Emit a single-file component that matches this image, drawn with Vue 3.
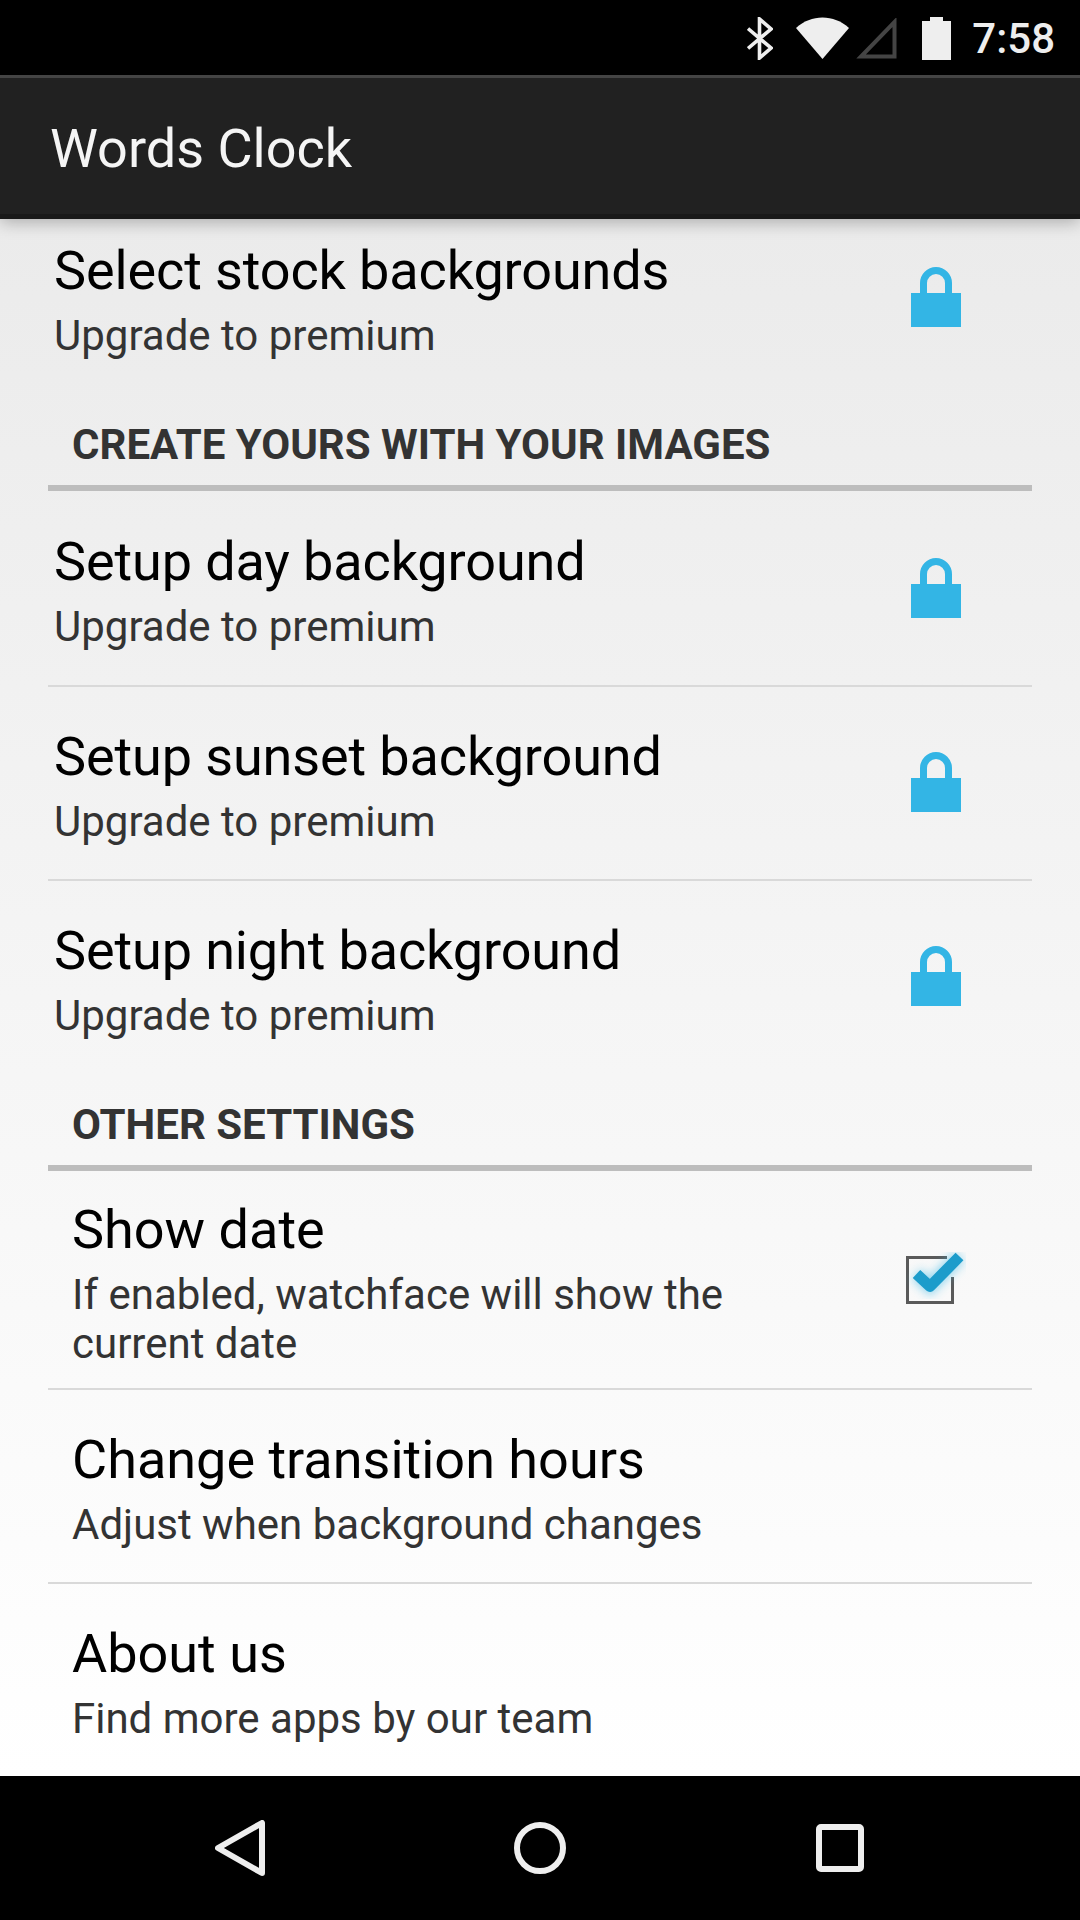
<script setup>
const lockedTop = [
  { title: 'Setup day background', sub: 'Upgrade to premium', cls: 'row-tall' },
  { title: 'Setup sunset background', sub: 'Upgrade to premium', cls: '' },
  { title: 'Setup night background', sub: 'Upgrade to premium', cls: 'row-plain row-night' },
]
</script>

<template>
  <div class="screen">
    <header class="status">
      <svg class="ic-bt" viewBox="0 0 26 43" width="26" height="43">
        <path d="M1 11.500 L24 31 L12.500 41 V2 L24 12 L1 31.500" fill="none" stroke="#eee" stroke-width="3.6" />
      </svg>
      <svg class="ic-wifi" viewBox="0 0 53 42" width="53" height="42">
        <path d="M0 11 C15 -3 38 -3 53 11 L26.500 42 Z" fill="#eee" />
      </svg>
      <svg class="ic-signal" viewBox="0 0 41 41" width="41" height="41">
        <path d="M38.500 4 V38.500 H5 Z" fill="none" stroke="#444" stroke-width="4" />
      </svg>
      <svg class="ic-battery" viewBox="0 0 29 43" width="29" height="43">
        <path d="M8 0 H21 V4 H29 V43 H0 V4 H8 Z" fill="#eee" />
      </svg>
      <span class="time">7:58</span>
    </header>

    <div class="appbar">
      <span class="appbar-title">Words Clock</span>
    </div>

    <main class="content">
      <div class="row row-locked row-first row-plain">
        <div class="text">
          <div class="title">Select stock backgrounds</div>
          <div class="sub">Upgrade to premium</div>
        </div>
        <svg class="lock" viewBox="0 0 50 60" width="50" height="60">
          <path d="M12.500 28 V16 A12.500 12.500 0 0 1 37.500 16 V28" fill="none" stroke="#33b5e5" stroke-width="7" />
          <rect x="0" y="26" width="50" height="34" fill="#33b5e5" />
        </svg>
      </div>

      <div class="section">CREATE YOURS WITH YOUR IMAGES</div>

      <div v-for="item in lockedTop" :key="item.title" class="row row-locked" :class="item.cls">
        <div class="text">
          <div class="title">{{ item.title }}</div>
          <div class="sub">{{ item.sub }}</div>
        </div>
        <svg class="lock" viewBox="0 0 50 60" width="50" height="60">
          <path d="M12.500 28 V16 A12.500 12.500 0 0 1 37.500 16 V28" fill="none" stroke="#33b5e5" stroke-width="7" />
          <rect x="0" y="26" width="50" height="34" fill="#33b5e5" />
        </svg>
      </div>

      <div class="section">OTHER SETTINGS</div>

      <div class="row row-wide row-date">
        <div class="text">
          <div class="title">Show date</div>
          <div class="sub">If enabled, watchface will show the<br />current date</div>
        </div>
        <svg class="check" viewBox="0 -4 60 56" width="60" height="56">
          <defs>
            <filter id="glow" x="-40%" y="-40%" width="180%" height="180%">
              <feGaussianBlur stdDeviation="5" />
            </filter>
          </defs>
          <path d="M1.500 1.500 H41 M46.500 21 V46.500 H1.500 V0" fill="none" stroke="#5a5a5a" stroke-width="3" />
          <path d="M10.500 18 L24 30.500 L53.500 0.500" fill="none" stroke="#33b5e5" stroke-width="14" opacity="0.5" filter="url(#glow)" />
          <path d="M10.500 18 L24 30.500 L53.500 0.500" fill="none" stroke="#1c9ccb" stroke-width="11" stroke-linejoin="round" />
        </svg>
      </div>

      <div class="row row-wide">
        <div class="text">
          <div class="title">Change transition hours</div>
          <div class="sub">Adjust when background changes</div>
        </div>
      </div>

      <div class="row row-wide row-plain row-last">
        <div class="text">
          <div class="title">About us</div>
          <div class="sub">Find more apps by our team</div>
        </div>
      </div>
    </main>

    <footer class="nav">
      <svg viewBox="0 0 50 56" width="50" height="56">
        <path d="M47 3 V53 L3 28 Z" fill="none" stroke="#eee" stroke-width="6" stroke-linejoin="round" />
      </svg>
      <svg viewBox="0 0 52 52" width="52" height="52">
        <circle cx="26" cy="26" r="23" fill="none" stroke="#eee" stroke-width="6" />
      </svg>
      <svg class="nav-recent" viewBox="0 0 48 48" width="48" height="48">
        <rect x="3" y="3" width="42" height="42" rx="2" fill="none" stroke="#eee" stroke-width="6" />
      </svg>
    </footer>
  </div>
</template>

<style scoped>
.screen {
  width: 1080px;
  height: 1920px;
  display: flex;
  flex-direction: column;
  overflow: hidden;
  font-family: Roboto, "Liberation Sans", sans-serif;
  background: #000;
}
.status {
  height: 75px;
  flex: none;
  display: flex;
  align-items: center;
  justify-content: flex-end;
  padding: 2px 25px 0 0;
  background: #000;
  box-sizing: border-box;
}
.ic-bt { margin-right: 23px; }
.ic-wifi { margin-right: 7px; margin-top: -1px; }
.ic-signal { margin-right: 25px; }
.ic-battery { margin-right: 21px; margin-top: -1px; }
.time {
  color: #eee;
  font-size: 42px;
  line-height: 73px;
  font-weight: 500;
}
.appbar {
  height: 144px;
  flex: none;
  box-sizing: border-box;
  border-top: 3px solid #444;
  border-bottom: 5px solid #191919;
  background: #212121;
  display: flex;
  align-items: center;
  padding: 5px 0 0 50px;
  position: relative;
  z-index: 2;
  box-shadow: 0 3px 16px rgba(0, 0, 0, 0.28);
}
.appbar-title {
  color: #f5f5f5;
  font-size: 54px;
}
.content {
  flex: 1;
  min-height: 0;
  overflow: hidden;
  background: linear-gradient(#ebebeb, #ffffff);
}
.row {
  margin: 0 48px;
  height: 194px;
  box-sizing: border-box;
  border-bottom: 2px solid #d9d9d9;
  padding: 0 71px 0 6px;
  display: flex;
  align-items: center;
  justify-content: space-between;
}
.row-first { margin-top: -18px; }
.row-tall { height: 196px; }
.row-plain { border-bottom: none; }
.row-wide { padding-left: 24px; }
.row-date {
  height: 219px;
  padding-right: 66px;
}
.row-last { height: 192px; }
.text { margin-top: 5px; }
.row-first .text { margin-top: 3px; }
.row-night .text { margin-top: 3px; }
.row-date .text { margin-top: 6px; }
.lock { margin-top: -2px; }
.row-tall .lock { margin-top: 0; }
.row-night .lock { margin-top: -4px; }
.title {
  color: #000;
  font-size: 54px;
  line-height: 64px;
}
.row-locked .title { letter-spacing: -0.12px; }
.sub {
  color: #333;
  font-size: 42px;
  line-height: 49px;
  margin-top: 8px;
}
.section {
  margin: 0 48px;
  height: 96px;
  box-sizing: border-box;
  padding: 25px 0 0 24px;
  border-bottom: 6px solid #bdbdbd;
  color: #333;
  font-size: 42px;
  font-weight: 700;
  line-height: 49px;
}
.nav {
  height: 144px;
  flex: none;
  background: #000;
  display: flex;
  align-items: center;
  padding-left: 215px;
  gap: 249px;
}
.nav-recent { margin-left: 1px; }
</style>
